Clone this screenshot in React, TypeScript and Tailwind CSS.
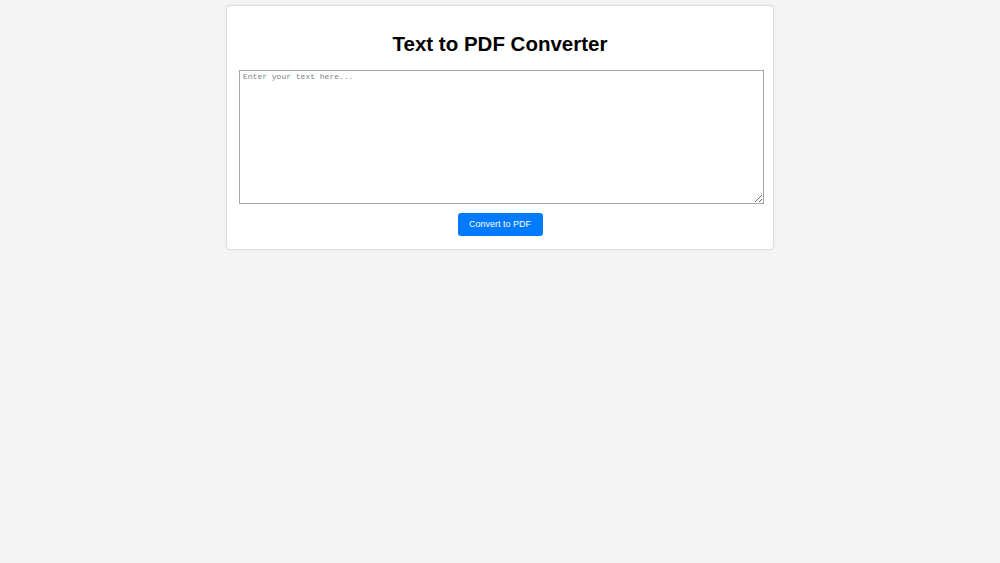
export default function App() {
  return (
    <div className="min-h-screen w-full bg-[#f4f4f4] pt-[5px] font-['Liberation_Sans',Arial,sans-serif]">
      <div className="mx-auto flex w-[548px] flex-col items-start rounded-[4px] border border-[#dddddd] bg-white px-[12px] pb-[13px] pt-[26px] shadow-[0_0_3px_rgba(0,0,0,0.06)]">
        <h1 className="mb-[14px] w-full text-center text-[20.5px] font-bold leading-[24px] text-black">
          Text to PDF Converter
        </h1>
        <textarea
          placeholder="Enter your text here..."
          className="block h-[134px] w-[525px] resize border border-[#a6a6a6] bg-white px-[3px] py-[1px] font-['Liberation_Mono','DejaVu_Sans_Mono',monospace] text-[8px] leading-[10px] text-black outline-none placeholder:text-[#808080]"
        />
        <div className="mt-[9px] flex w-full justify-center">
          <button className="h-[23px] w-[85px] rounded-[3px] bg-[#007bff] text-[9px] leading-none text-white">
            Convert to PDF
          </button>
        </div>
      </div>
    </div>
  );
}
